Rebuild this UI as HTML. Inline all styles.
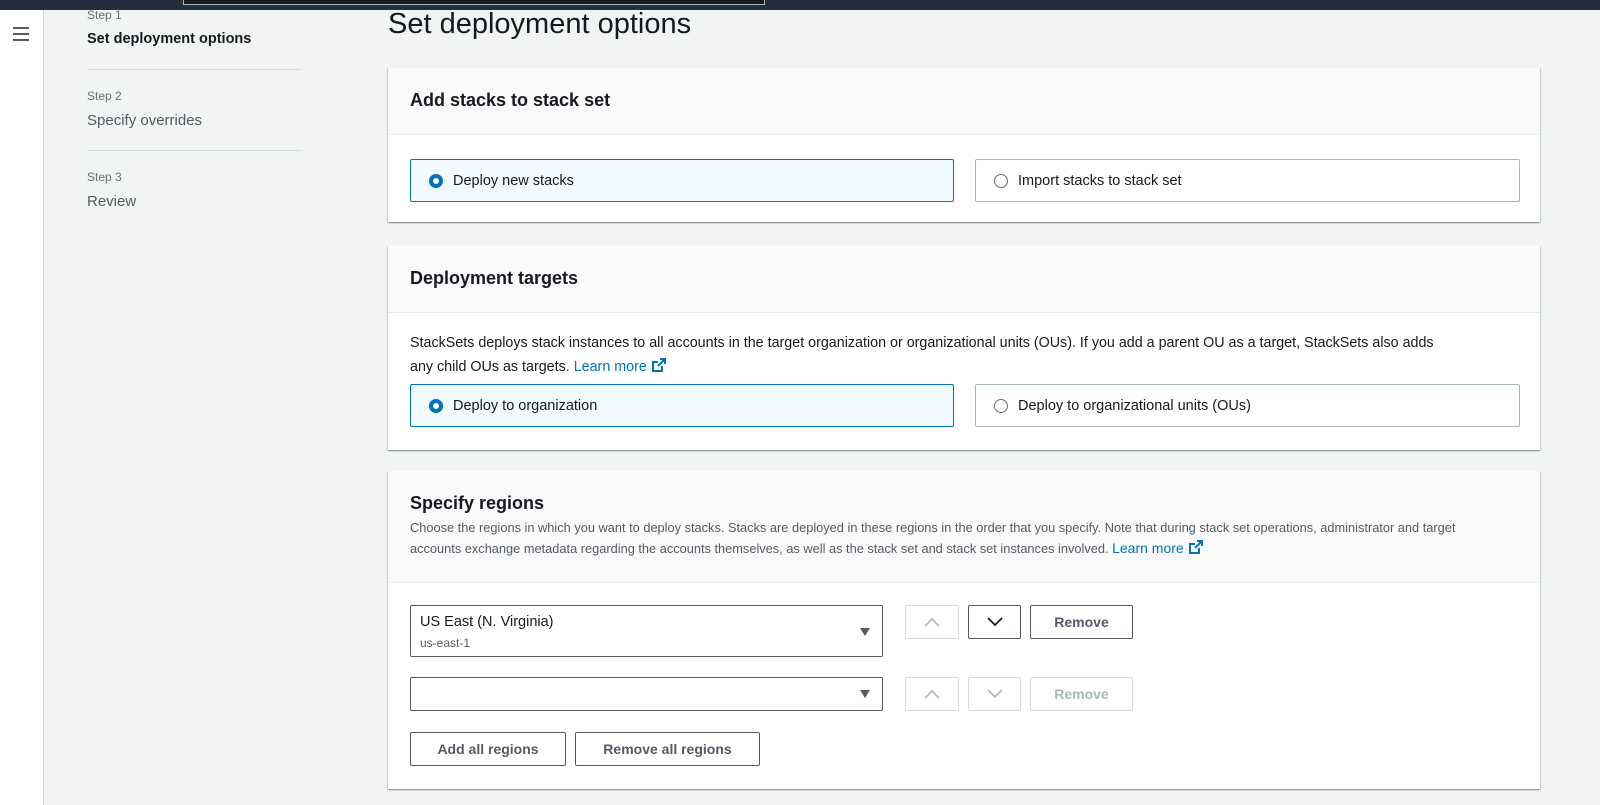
<!DOCTYPE html>
<html><head><style>
*{box-sizing:border-box;margin:0;padding:0}
body{width:1600px;height:805px;overflow:hidden;background:#f2f3f3;font-family:"Liberation Sans",sans-serif;color:#16191f;position:relative;font-size:14px}
.abs{position:absolute}
.top{left:0;top:0;width:1600px;height:10px;background:#232f3e}
.search{left:183px;top:-2px;width:582px;height:7px;border:1px solid #aab7b8;border-top:none;background:#16191f}
.rail{left:0;top:10px;width:44px;height:795px;background:#fff;border-right:1px solid #d5dbdb}
.step{left:87px;font-size:12px;color:#687078}
.stitle{left:87px;font-size:15px;color:#545b64}
.hr{left:87px;width:214px;height:1px;background:#d5dbdb}
.panel{left:388px;width:1152px;background:#fff;box-shadow:0 1px 1px rgba(0,28,36,.3),1px 1px 1px rgba(0,28,36,.15),-1px 1px 1px rgba(0,28,36,.15)}
.ph{background:#fafafa;border-bottom:1px solid #eaeded;padding:0 22px}
.ph h2{font-size:18px;font-weight:bold}
.tile{position:absolute;height:43px;border:1px solid #aab7b8;border-radius:2px;display:flex;align-items:center;padding-left:18px;font-size:14.5px}
.tile.on{background:#f1faff;border-color:#0073bb}
.rad{width:14px;height:14px;border-radius:50%;border:1px solid #687078;margin-right:10px;background:#fff}
.on .rad{border:4px solid #0073bb}
a{color:#0073bb;text-decoration:none}
.btn{position:absolute;border:1px solid #545b64;border-radius:2px;background:#fff;font-weight:bold;font-size:14px;color:#545b64;display:flex;align-items:center;justify-content:center}
.dis{border-color:#d5dbdb;color:#aab7b8}
.sel{position:absolute;left:410px;width:473px;border:1px solid #545b64;border-radius:2px;background:#fff}
.caret{position:absolute;right:12px;width:0;height:0;border-left:5px solid transparent;border-right:5px solid transparent;border-top:8px solid #545b64}
.ext{display:inline-block;vertical-align:-2px}
</style></head><body>
<div class="abs top"></div><div class="abs search"></div>
<div class="abs rail"><div style="position:absolute;left:13px;top:17px;width:16px">
<div style="height:2px;background:#545b64;margin-bottom:4px"></div><div style="height:2px;background:#545b64;margin-bottom:4px"></div><div style="height:2px;background:#545b64"></div></div></div>
<div class="abs step" style="top:8px">Step 1</div>
<div class="abs stitle" style="top:31px;font-weight:bold;color:#16191f;font-size:14.5px">Set deployment options</div>
<div class="abs hr" style="top:69px"></div>
<div class="abs step" style="top:89px">Step 2</div>
<div class="abs stitle" style="top:112px">Specify overrides</div>
<div class="abs hr" style="top:150px"></div>
<div class="abs step" style="top:170px">Step 3</div>
<div class="abs stitle" style="top:193px">Review</div>
<div class="abs" style="left:388px;top:8px;font-size:29px;color:#16191f">Set deployment options</div>

<div class="abs panel" style="top:68px;height:154px">
<div class="ph" style="height:67px;padding-top:22px"><h2>Add stacks to stack set</h2></div>
</div>
<div class="tile on" style="left:410px;top:159px;width:544px"><div class="rad"></div>Deploy new stacks</div>
<div class="tile" style="left:975px;top:159px;width:545px"><div class="rad"></div>Import stacks to stack set</div>

<div class="abs panel" style="top:246px;height:204px">
<div class="ph" style="height:67px;padding-top:22px"><h2>Deployment targets</h2></div>
<div style="padding:18px 22px 0;line-height:24px;font-size:14.3px">StackSets deploys stack instances to all accounts in the target organization or organizational units (OUs). If you add a parent OU as a target, StackSets also adds<br>any child OUs as targets. <a>Learn more <svg class="ext" width="16" height="16" viewBox="0 0 16 16" fill="none" stroke="#0073bb" stroke-width="2"><path d="M9 2h5v5M14 2L7 9M11 9v5H2V5h5"/></svg></a></div>
</div>
<div class="tile on" style="left:410px;top:384px;width:544px"><div class="rad"></div>Deploy to organization</div>
<div class="tile" style="left:975px;top:384px;width:545px"><div class="rad"></div>Deploy to organizational units (OUs)</div>

<div class="abs panel" style="top:471px;height:318px">
<div class="ph" style="height:112px;padding-top:22px"><h2>Specify regions</h2>
<div style="font-size:12.8px;line-height:21px;color:#545b64;margin-top:3px">Choose the regions in which you want to deploy stacks. Stacks are deployed in these regions in the order that you specify. Note that during stack set operations, administrator and target<br>accounts exchange metadata regarding the accounts themselves, as well as the stack set and stack set instances involved. <a style="font-size:14px">Learn more <svg class="ext" width="16" height="16" viewBox="0 0 16 16" fill="none" stroke="#0073bb" stroke-width="2"><path d="M9 2h5v5M14 2L7 9M11 9v5H2V5h5"/></svg></a></div></div>
</div>
<div class="sel" style="top:605px;height:52px"><div style="position:absolute;left:9px;top:8px;font-size:14.5px">US East (N. Virginia)</div><div style="position:absolute;left:9px;top:30px;font-size:12px;color:#545b64">us-east-1</div><div class="caret" style="top:22px"></div></div>
<div class="sel" style="top:677px;height:34px"><div class="caret" style="top:12px"></div></div>
<div class="btn dis" style="left:905px;top:605px;width:54px;height:34px"><svg width="18" height="10" viewBox="0 0 18 10" fill="none" stroke="#aab7b8" stroke-width="1.6"><path d="M2 9l7-7 7 7"/></svg></div>
<div class="btn" style="left:968px;top:605px;width:53px;height:34px"><svg width="18" height="10" viewBox="0 0 18 10" fill="none" stroke="#16191f" stroke-width="1.8"><path d="M2 1l7 7 7-7"/></svg></div>
<div class="btn" style="left:1030px;top:605px;width:103px;height:34px">Remove</div>
<div class="btn dis" style="left:905px;top:677px;width:54px;height:34px"><svg width="18" height="10" viewBox="0 0 18 10" fill="none" stroke="#aab7b8" stroke-width="1.6"><path d="M2 9l7-7 7 7"/></svg></div>
<div class="btn dis" style="left:968px;top:677px;width:53px;height:34px"><svg width="18" height="10" viewBox="0 0 18 10" fill="none" stroke="#aab7b8" stroke-width="1.6"><path d="M2 1l7 7 7-7"/></svg></div>
<div class="btn dis" style="left:1030px;top:677px;width:103px;height:34px">Remove</div>
<div class="btn" style="left:410px;top:732px;width:156px;height:34px">Add all regions</div>
<div class="btn" style="left:575px;top:732px;width:185px;height:34px">Remove all regions</div>
</body></html>
